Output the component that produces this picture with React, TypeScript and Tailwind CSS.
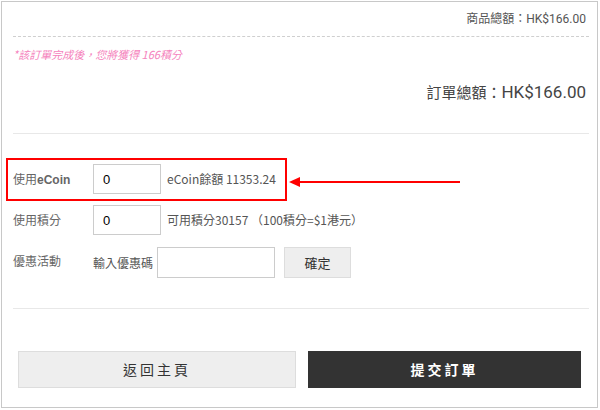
export default function App() {
  return (
    <div className="w-[600px] h-[410px] bg-white pt-px pl-px font-['Noto_Sans_CJK_TC','Noto_Sans',sans-serif] text-[#555]">
      <div className="w-[597px] h-[407px] border border-[#c8c8c8] pl-[11px] pr-[8px] pt-[8px]">
        {/* Totals */}
        <div className="text-right text-[12px] leading-[16px] pr-[3px] text-[#555]">
          商品總額：<span className="font-['Roboto','Liberation_Sans',sans-serif]">HK$166.00</span>
        </div>
        <div className="mt-[9px] border-t border-dashed border-[#cfcfcf]" />
        <div className="mt-[9px] text-[11px] leading-[16px] italic text-[#f583bd]">*該訂單完成後，您將獲得 166積分</div>
        <div className="mt-[17px] text-right leading-[24px] pr-[3px] text-[#444]">
          <span className="text-[15px]">訂單總額：</span>
          <span className="text-[17px] font-['Roboto','Liberation_Sans',sans-serif]">HK$166.00</span>
        </div>
        <div className="mt-[29px] border-t border-[#e8e8e8]" />

        {/* Payment options */}
        <div className="mt-[30px] flex flex-col gap-[11px] text-[12px]">
          <div className="relative flex items-center h-[30px]">
            <div className="w-[80px] text-[#666]">
              使用<span className="font-bold font-['Liberation_Sans',sans-serif]">eCoin</span>
            </div>
            <input
              className="w-[68px] h-[30px] border border-[#ccc] pl-[9px] text-[13px] text-black font-['Liberation_Sans',sans-serif] outline-none"
              defaultValue="0"
            />
            <span className="ml-[6px] text-[#555]">eCoin餘額 11353.24</span>
            <div className="absolute left-[-7px] top-[-6px] w-[281px] h-[43px] border-2 border-[#f00] pointer-events-none" />
            <svg className="absolute left-[276px] top-[13px]" width="172" height="10" viewBox="0 0 172 10">
              <line x1="6" y1="5" x2="171" y2="5" stroke="#f00" strokeWidth="2" />
              <polygon points="0,5 11,0 11,10" fill="#f00" />
            </svg>
          </div>

          <div className="flex items-center h-[30px]">
            <div className="w-[80px] text-[#666]">使用積分</div>
            <input
              className="w-[68px] h-[30px] border border-[#ccc] pl-[9px] text-[13px] text-black font-['Liberation_Sans',sans-serif] outline-none"
              defaultValue="0"
            />
            <span className="ml-[6px] text-[#555]">可用積分30157 （100積分=$1港元）</span>
          </div>

          <div className="flex items-center h-[31px] mt-px">
            <div className="w-[80px] text-[#666] -mt-[4px]">優惠活動</div>
            <span className="text-[#555]">輸入優惠碼</span>
            <input className="ml-[4px] w-[118px] h-[31px] border border-[#ccc] outline-none" />
            <button className="ml-[9px] w-[67px] h-[31px] bg-[#eee] border border-[#ddd] text-[13px] text-[#333]">
              確定
            </button>
          </div>
        </div>

        <div className="mt-[30px] border-t border-[#e8e8e8]" />

        {/* Actions */}
        <div className="mt-[42px] flex gap-[12px] pl-[5px]">
          <button className="w-[278px] h-[37px] bg-[#eee] border border-[#ddd] text-[14px] tracking-[3px] text-[#333]">
            返回主頁
          </button>
          <button className="w-[273px] h-[37px] bg-[#333] text-[14px] font-bold tracking-[3px] text-white">
            提交訂單
          </button>
        </div>
      </div>
    </div>
  );
}
